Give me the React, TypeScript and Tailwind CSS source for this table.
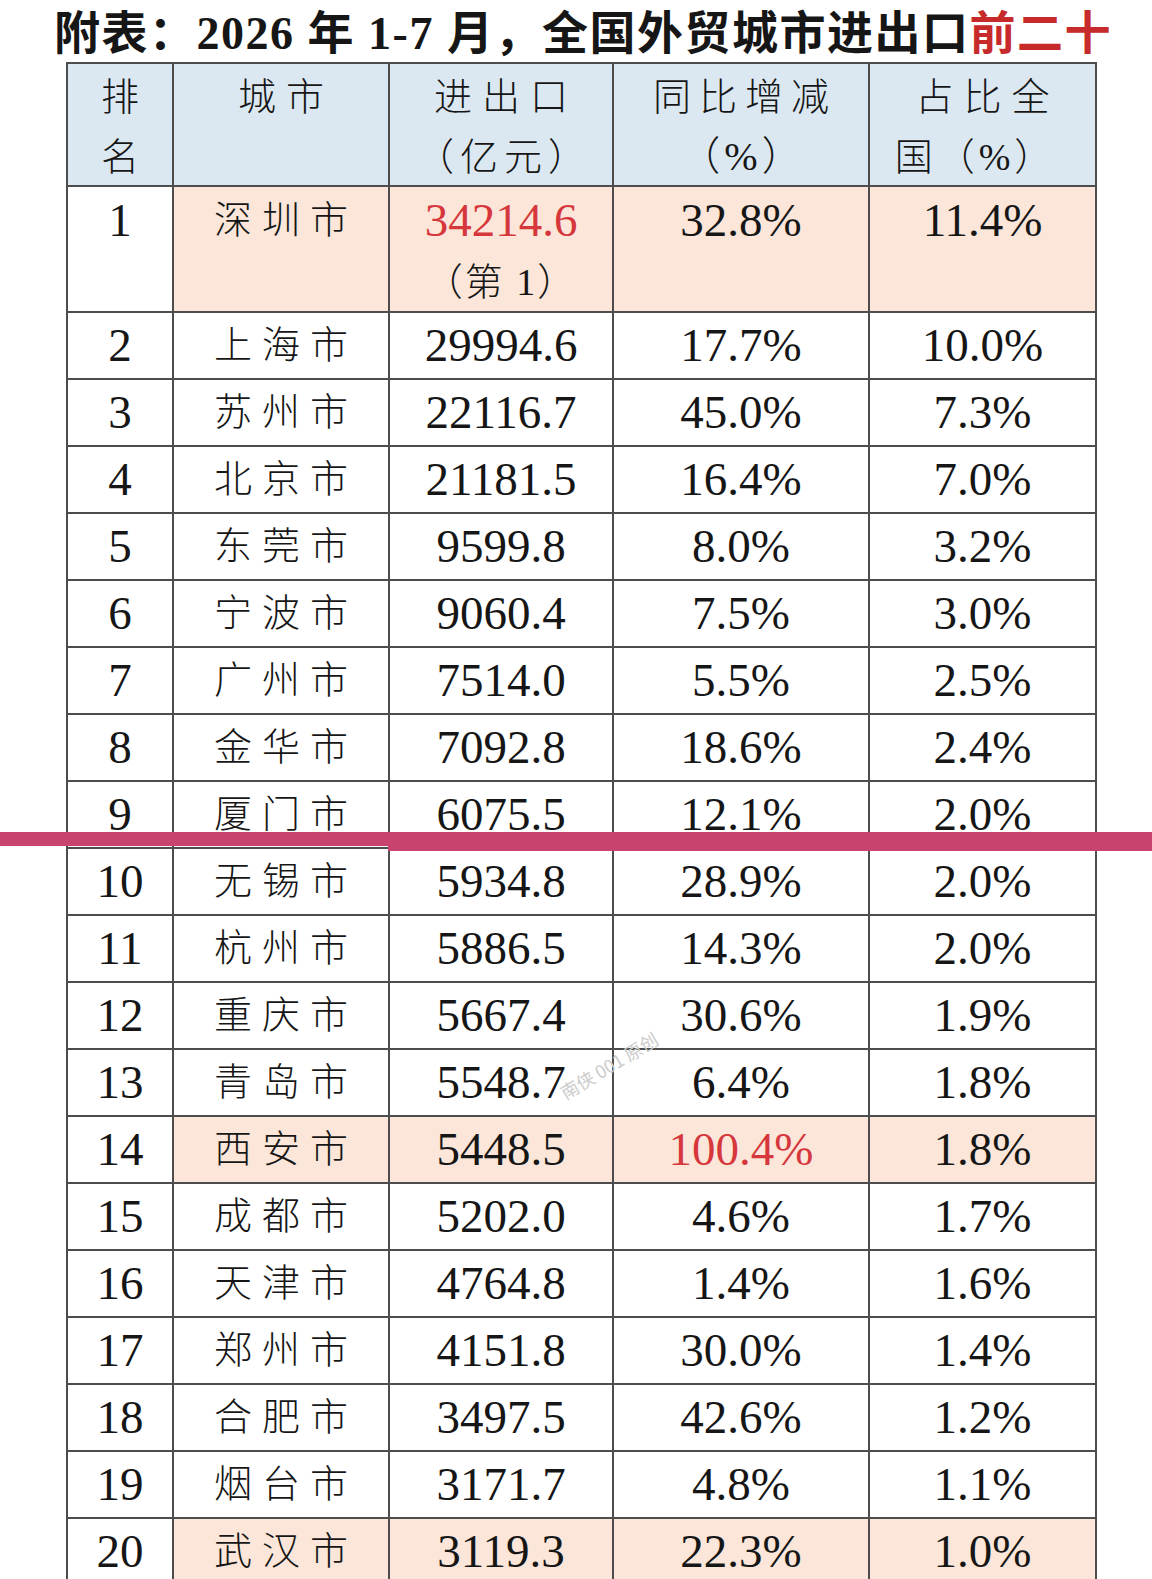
import React from "react";

type Row = {
  rank: number;
  city: string;
  value: string;
  yoy: string;
  share: string;
  hl?: boolean;
  redValue?: boolean;
  redYoy?: boolean;
  extra?: string;
};

const rows: Row[] = [
  { rank: 1, city: "深圳市", value: "34214.6", yoy: "32.8%", share: "11.4%", hl: true, redValue: true, extra: "（第 1）" },
  { rank: 2, city: "上海市", value: "29994.6", yoy: "17.7%", share: "10.0%" },
  { rank: 3, city: "苏州市", value: "22116.7", yoy: "45.0%", share: "7.3%" },
  { rank: 4, city: "北京市", value: "21181.5", yoy: "16.4%", share: "7.0%" },
  { rank: 5, city: "东莞市", value: "9599.8", yoy: "8.0%", share: "3.2%" },
  { rank: 6, city: "宁波市", value: "9060.4", yoy: "7.5%", share: "3.0%" },
  { rank: 7, city: "广州市", value: "7514.0", yoy: "5.5%", share: "2.5%" },
  { rank: 8, city: "金华市", value: "7092.8", yoy: "18.6%", share: "2.4%" },
  { rank: 9, city: "厦门市", value: "6075.5", yoy: "12.1%", share: "2.0%" },
  { rank: 10, city: "无锡市", value: "5934.8", yoy: "28.9%", share: "2.0%" },
  { rank: 11, city: "杭州市", value: "5886.5", yoy: "14.3%", share: "2.0%" },
  { rank: 12, city: "重庆市", value: "5667.4", yoy: "30.6%", share: "1.9%" },
  { rank: 13, city: "青岛市", value: "5548.7", yoy: "6.4%", share: "1.8%" },
  { rank: 14, city: "西安市", value: "5448.5", yoy: "100.4%", share: "1.8%", hl: true, redYoy: true },
  { rank: 15, city: "成都市", value: "5202.0", yoy: "4.6%", share: "1.7%" },
  { rank: 16, city: "天津市", value: "4764.8", yoy: "1.4%", share: "1.6%" },
  { rank: 17, city: "郑州市", value: "4151.8", yoy: "30.0%", share: "1.4%" },
  { rank: 18, city: "合肥市", value: "3497.5", yoy: "42.6%", share: "1.2%" },
  { rank: 19, city: "烟台市", value: "3171.7", yoy: "4.8%", share: "1.1%" },
  { rank: 20, city: "武汉市", value: "3119.3", yoy: "22.3%", share: "1.0%", hl: true },
];

const font = { fontFamily: '"Liberation Serif", "Noto Sans CJK SC", serif' };

const cell = "border-r-2 border-b-2 border-[#4d4d4d] flex flex-col items-center text-center";

export default function App() {
  return (
    <div className="relative w-[1152px] h-[1579px] overflow-hidden bg-white text-[#161616]" style={font}>
      <div className="h-[62px] flex items-center justify-center pt-[6px] pl-[14px]">
        <div className="text-[46px] font-bold leading-none whitespace-nowrap tracking-[1.5px]">
          附表：2026 年 1-7 月，全国外贸城市进出口<span className="text-[#c62a2a]">前二十</span>
        </div>
      </div>

      <div className="ml-[66px] w-[1031px] border-l-2 border-t-2 border-[#4d4d4d] grid grid-cols-[106px_216px_224px_256px_227px]">
        {/* header */}
        <div className={`${cell} h-[123px] bg-[#dbe8f1] pt-[3px] font-light text-[38px] leading-[60px]`}>
          <span>排</span>
          <span>名</span>
        </div>
        <div className={`${cell} h-[123px] bg-[#dbe8f1] pt-[3px] font-light text-[38px] leading-[60px]`}>
          <span className="tracking-[10px] pl-[10px]">城市</span>
        </div>
        <div className={`${cell} h-[123px] bg-[#dbe8f1] pt-[3px] font-light text-[38px] leading-[60px]`}>
          <span className="tracking-[10px] pl-[10px]">进出口</span>
          <span className="tracking-[6px] pl-[6px]">（亿元）</span>
        </div>
        <div className={`${cell} h-[123px] bg-[#dbe8f1] pt-[3px] font-light text-[38px] leading-[60px]`}>
          <span className="tracking-[8px] pl-[8px]">同比增减</span>
          <span className="text-[40px] tracking-[4px] pl-[4px]">（%）</span>
        </div>
        <div className={`${cell} h-[123px] bg-[#dbe8f1] pt-[3px] font-light text-[38px] leading-[60px]`}>
          <span className="tracking-[10px] pl-[10px]">占比全</span>
          <span className="tracking-[4px] pr-[14px]">国（%）</span>
        </div>

        {rows.map((r) => {
          const h = r.extra ? "h-[126px]" : "h-[67px]";
          const bg = r.hl ? "bg-[#fbe6d9]" : "bg-white";
          const lh = r.extra ? "leading-[62px] pt-[2px]" : "leading-[65px]";
          return (
            <React.Fragment key={r.rank}>
              <div className={`${cell} ${h} ${lh} bg-white text-[47px]`}>{r.rank}</div>
              <div className={`${cell} ${h} ${lh} ${bg} text-[38px] font-light`}>
                <span className="tracking-[10px] pl-[10px]">{r.city}</span>
              </div>
              <div className={`${cell} ${h} ${lh} ${bg} text-[47px]`}>
                <span className={r.redValue ? "text-[#d6373c]" : ""}>{r.value}</span>
                {r.extra && <span className="text-[38px] font-light tracking-[2px]">{r.extra}</span>}
              </div>
              <div className={`${cell} ${h} ${lh} ${bg} text-[47px]`}>
                <span className={r.redYoy ? "text-[#d6373c]" : ""}>{r.yoy}</span>
              </div>
              <div className={`${cell} ${h} ${lh} ${bg} text-[47px]`}>{r.share}</div>
            </React.Fragment>
          );
        })}
      </div>

      {/* watermark */}
      <div
        className="absolute left-[554px] top-[1052px] text-[18px] text-[#cbcbcb] whitespace-nowrap -rotate-[31deg]"
        style={{ fontFamily: '"Noto Sans CJK SC", sans-serif' }}
      >
        南侠 001 原创
      </div>

      {/* overlay band */}
      <div className="absolute left-0 top-[832px] w-[390px] h-[14px] bg-[#c9436f]" />
      <div className="absolute left-[388px] top-[832px] right-0 h-[19px] bg-[#c9436f]" />
    </div>
  );
}
